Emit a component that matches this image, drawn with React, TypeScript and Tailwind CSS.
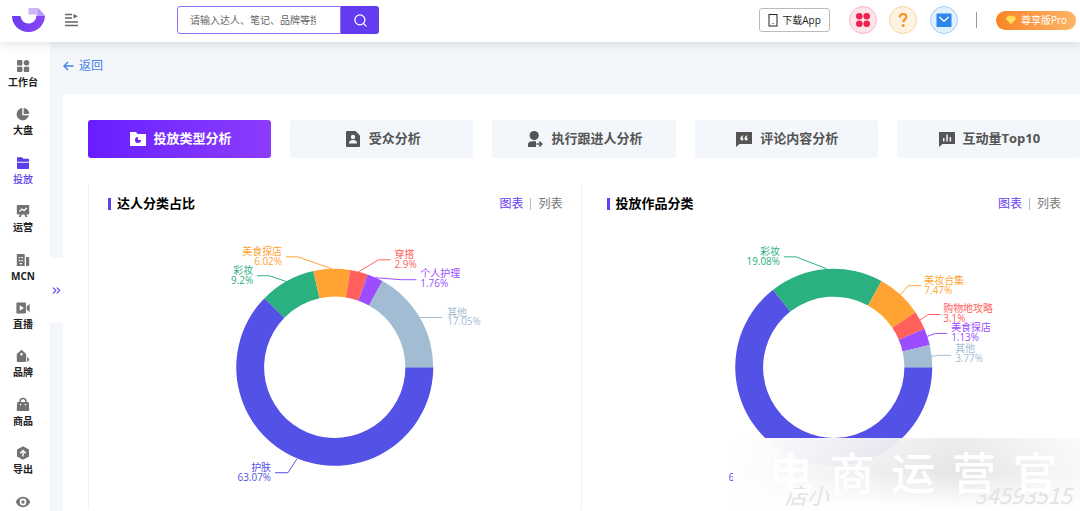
import type { ReactNode } from 'react';
import { ChevronsRight, Search } from 'lucide-react';

type Slice = {
  name: string;
  percent: string;
  color: string;
  // start and end angle in degrees, clockwise from three o'clock
  from: number;
  to: number;
  line: string;
  x: number;
  y: number;
  anchor: 'start' | 'end';
};

const CX = 247;
const CY = 144;
const OUTER = 99;
const INNER = 71;

const creatorSlices: Slice[] = [
  { name: '护肤', percent: '63.07%', color: '#5451e6', from: 0, to: 224.5, line: '187,250 200,250 209,236', x: 183, y: 248, anchor: 'end' },
  { name: '彩妆', percent: '9.2%', color: '#2bb080', from: 224.5, to: 257.5, line: '169,52 181,52 199,58', x: 165, y: 50, anchor: 'end' },
  { name: '美食探店', percent: '6.02%', color: '#ffa332', from: 257.5, to: 279, line: '198,33 210,33 244,45', x: 194, y: 31, anchor: 'end' },
  { name: '穿搭', percent: '2.9%', color: '#ff605c', from: 279, to: 289.5, line: '271,48 291,36 303,36', x: 307, y: 34, anchor: 'start' },
  { name: '个人护理', percent: '1.76%', color: '#9b4dff', from: 289.5, to: 299, line: '288,54 314,56 329,56', x: 333, y: 53, anchor: 'start' },
  { name: '其他', percent: '17.05%', color: '#a2bcd3', from: 299, to: 360, line: '332,94 343,94 355,94', x: 360, y: 92, anchor: 'start' },
];

const workSlices: Slice[] = [
  { name: '护肤', percent: '65.45%', color: '#5451e6', from: 0, to: 232, line: '178,250 191,250 202,232', x: 175, y: 248, anchor: 'end' },
  { name: '彩妆', percent: '19.08%', color: '#2bb080', from: 232, to: 299, line: '197,33 209,33 240,45', x: 193, y: 31, anchor: 'end' },
  { name: '美妆合集', percent: '7.47%', color: '#ffa332', from: 299, to: 326, line: '314,71 322,62 335,62', x: 338, y: 60, anchor: 'start' },
  { name: '购物地攻略', percent: '3.1%', color: '#ff605c', from: 326, to: 337, line: '333,97 342,91 354,91', x: 357, y: 88, anchor: 'start' },
  { name: '美食探店', percent: '1.13%', color: '#9b4dff', from: 337, to: 347, line: '341,113 349,110 361,110', x: 365, y: 108, anchor: 'start' },
  { name: '其他', percent: '3.77%', color: '#a2bcd3', from: 347, to: 360, line: '345,133 353,132 365,132', x: 369, y: 129, anchor: 'start' },
];

function point(radius: number, deg: number) {
  const rad = (deg * Math.PI) / 180;
  return `${(CX + radius * Math.cos(rad)).toFixed(2)} ${(CY + radius * Math.sin(rad)).toFixed(2)}`;
}

function ringPath({ from, to }: Slice) {
  const large = to - from > 180 ? 1 : 0;
  return `M${point(OUTER, from)} A${OUTER} ${OUTER} 0 ${large} 1 ${point(OUTER, to)} L${point(INNER, to)} A${INNER} ${INNER} 0 ${large} 0 ${point(INNER, from)} Z`;
}

function Donut({ slices, label }: { slices: Slice[]; label: string }) {
  return (
    <svg viewBox="0 0 494 287" className="block w-full" role="img" aria-label={label}>
      {slices.map((slice) => (
        <g key={slice.name} fill={slice.color}>
          <path d={ringPath(slice)} />
          <polyline points={slice.line} fill="none" stroke={slice.color} />
          <text x={slice.x} y={slice.y} textAnchor={slice.anchor} fontSize="10">
            {slice.name}
          </text>
          <text x={slice.x} y={slice.y + 10} textAnchor={slice.anchor} fontSize="10">
            {slice.percent}
          </text>
        </g>
      ))}
    </svg>
  );
}

function Glyph({ children, className = 'size-4' }: { children: ReactNode; className?: string }) {
  return (
    <svg viewBox="0 0 16 16" fill="currentColor" className={className} aria-hidden="true">
      {children}
    </svg>
  );
}

const navItems: { id: string; label?: string; icon: ReactNode; active?: boolean }[] = [
  {
    id: 'workbench',
    label: '工作台',
    icon: (
      <>
        <rect x="2" y="2" width="5.4" height="5.4" rx="1" />
        <circle cx="11.5" cy="4.7" r="2.8" />
        <rect x="2" y="8.7" width="5.4" height="5.4" rx="1" />
        <rect x="8.8" y="8.7" width="5.4" height="5.4" rx="1" />
      </>
    ),
  },
  {
    id: 'market',
    label: '大盘',
    icon: (
      <>
        <path d="M7.3 2a6.2 6.2 0 1 0 6.600 7.300H7.300z" />
        <path d="M8.700 1.900v6h5.500a6 6 0 0 0-5.500-6z" />
      </>
    ),
  },
  {
    id: 'placement',
    label: '投放',
    active: true,
    icon: (
      <>
        <path d="M2 2.200h5l1.400 1.600H14v3H2z" />
        <path d="M2 7.800h12V13a1 1 0 0 1-1 1H3a1 1 0 0 1-1-1z" />
      </>
    ),
  },
  {
    id: 'operation',
    label: '运营',
    icon: (
      <>
        <path d="M2.500 2h11a.7.7 0 0 1 .7.7v8.100a.7.7 0 0 1-.7.7h-2.200l1.200 2.500h-2l-1.200-2.500H6.900L5.700 14h-2l1.200-2.500H2.500a.7.7 0 0 1-.7-.7V2.700a.7.7 0 0 1 .7-.7z" />
        <path d="m4.500 8.500 2.500-2.500 2 1.600L11.800 5" fill="none" stroke="#fff" strokeWidth="1.300" />
      </>
    ),
  },
  {
    id: 'mcn',
    label: 'MCN',
    icon: (
      <>
        <path
          fillRule="evenodd"
          d="M2.500 2H9a.7.7 0 0 1 .7.7V14H1.800V2.700a.7.7 0 0 1 .7-.7zM3.800 5v1.300h1.500V5zm2.600 0v1.300h1.500V5zM3.800 8v1.300h1.500V8zm2.600 0v1.300h1.500V8zM4.700 11v1.200h2.200V11z"
        />
        <path d="M11 5h2.300a.9.9 0 0 1 .9.9v7.200a.9.9 0 0 1-.9.9H11z" />
      </>
    ),
  },
  {
    id: 'live',
    label: '直播',
    icon: (
      <>
        <path
          fillRule="evenodd"
          d="M2 2.600h8.300a.6.6 0 0 1 .6.6v9.600a.6.6 0 0 1-.6.6H2a.6.6 0 0 1-.6-.6V3.200a.6.6 0 0 1 .6-.6zM4.700 5.300v5.400L9 8z"
        />
        <path d="M11.700 6.300 14.600 4v8l-2.900-2.300z" />
      </>
    ),
  },
  {
    id: 'brand',
    label: '品牌',
    icon: (
      <>
        <path
          fillRule="evenodd"
          d="M6.500 1.800 11.200 6v7.200a.8.8 0 0 1-.8.8H2.600a.8.8 0 0 1-.8-.8V6zm0 3.200a1.300 1.300 0 1 0 0 2.600 1.300 1.300 0 0 0 0-2.600z"
        />
        <path d="m12.200 8.500 2.400 3.500-2.400 2z" />
      </>
    ),
  },
  {
    id: 'goods',
    label: '商品',
    icon: (
      <>
        <path d="M2.300 5h11.400l.6 8a1 1 0 0 1-1 1H2.700a1 1 0 0 1-1-1z" />
        <path d="M5 6V4.500a3 3 0 0 1 6 0V6" fill="none" stroke="currentColor" strokeWidth="1.500" />
        <circle cx="5.600" cy="7.600" r="0.800" fill="#fff" />
        <circle cx="10.400" cy="7.600" r="0.800" fill="#fff" />
      </>
    ),
  },
  {
    id: 'export',
    label: '导出',
    icon: (
      <>
        <path d="m8 1.200 6 3.400v6.800l-6 3.400-6-3.400V4.600z" />
        <path d="M8 11.500V6M5.300 8.300 8 5.600l2.700 2.700" fill="none" stroke="#fff" strokeWidth="1.400" />
      </>
    ),
  },
  {
    id: 'watch',
    icon: (
      <path
        fillRule="evenodd"
        d="M8 2.800c3.400 0 6 2.200 7.200 5.200-1.200 3-3.800 5.200-7.200 5.200S2 11 .8 8C2 5 4.600 2.800 8 2.800zm0 1.800a3.400 3.400 0 1 0 0 6.800 3.400 3.400 0 0 0 0-6.800zm0 1.700a1.700 1.700 0 1 1 0 3.400 1.700 1.700 0 0 1 0-3.400z"
      />
    ),
  },
];

const tabs: { label: string; icon: ReactNode; active?: boolean }[] = [
  {
    label: '投放类型分析',
    active: true,
    icon: (
      <>
        <path d="M0 1h6l1.500 2H16v12H0z" />
        <path d="M8 6a3 3 0 1 0 3 3H8z" fill="#6f22ff" />
      </>
    ),
  },
  {
    label: '受众分析',
    icon: (
      <>
        <path d="M2 0h8.500L15 4.500V15a1 1 0 0 1-1 1H2a1 1 0 0 1-1-1V1a1 1 0 0 1 1-1z" />
        <circle cx="8" cy="6" r="2.200" fill="#f3f6fa" />
        <path d="M4 12.500c0-2.500 1.500-3.500 4-3.500s4 1 4 3.500z" fill="#f3f6fa" />
      </>
    ),
  },
  {
    label: '执行跟进人分析',
    icon: (
      <>
        <circle cx="7.200" cy="4.600" r="4.600" />
        <path d="M1 16v-2.500C1 11 3.500 10.300 7 10.300h2V16z" />
        <path d="M9.500 13h5M12.300 10.500l2.500 2.500-2.500 2.500" fill="none" stroke="currentColor" strokeWidth="1.600" />
      </>
    ),
  },
  {
    label: '评论内容分析',
    icon: (
      <>
        <path d="M0 1h16v12H3.500L0 16z" />
        <path d="M7.300 4.500C5.300 4.700 4.300 6 4.300 7.600c0 1.100.7 1.800 1.600 1.800s1.500-.6 1.500-1.500-.6-1.400-1.500-1.400c.1-.5.6-1 1.400-1.200zm4.200 0c-2 .2-3 1.500-3 3.100 0 1.100.7 1.800 1.600 1.800s1.500-.6 1.500-1.500-.6-1.400-1.500-1.400c.1-.5.6-1 1.400-1.200z" fill="#f3f6fa" />
      </>
    ),
  },
  {
    label: '互动量Top10',
    icon: (
      <>
        <path d="M0 1h16v12H3.500L0 16z" />
        <path d="M4 7h1.500v3.500H4zM7.300 3.500h1.500v7H7.300zM10.600 6h1.500v4.500h-1.500z" fill="#f3f6fa" />
      </>
    ),
  },
];

function Header() {
  return (
    <header className="relative z-20 flex h-[42px] shrink-0 items-center bg-white pb-[2px] shadow-[0_2px_10px_rgba(60,80,90,0.16)]">
      <a href="#home" aria-label="首页" className="ml-[11px]">
        <svg viewBox="0 0 34 26" className="h-[26px] w-[34px]" aria-hidden="true">
          <defs>
            <linearGradient id="logo" x1="0" x2="1">
              <stop offset="0" stopColor="#6b3df0" />
              <stop offset="1" stopColor="#8a45f5" />
            </linearGradient>
          </defs>
          <path d="M1 9h8.500c.6 4.500 3.800 7.500 8 7.500 3.800 0 6.700-2.200 7.700-6V8.500H34c0 9-7.500 16.500-16.500 16.500S1 18 1 9z" fill="url(#logo)" />
          <path d="M17.500 1H27l7 7.500h-8.800v-1h-7.700z" fill="#cfb8f8" />
          <path d="M27 1v7.500h7z" fill="#b595f5" />
        </svg>
      </a>
      <button type="button" aria-label="收起菜单" className="ml-5 text-[#666]">
        <svg viewBox="0 0 14 14" className="size-[14px]" fill="none" stroke="currentColor" strokeWidth="1.300" aria-hidden="true">
          <path d="M0 1.500h7M0 5h7M0 9h13M0 12.500h13" />
          <path d="M8.500 1v4.500L13 3.200z" fill="currentColor" stroke="none" />
        </svg>
      </button>
      <form className="ml-[98px] flex h-7 w-[202px]" onSubmit={(e) => e.preventDefault()}>
        <input
          type="text"
          aria-label="搜索"
          placeholder="请输入达人、笔记、品牌等搜索"
          className="min-w-0 flex-1 rounded-l-[3px] border border-[#8f70f2] pr-6 pl-3 text-[10px] outline-none placeholder:text-[#666]"
        />
        <button type="submit" aria-label="搜索" className="flex w-[38px] items-center justify-center rounded-r-[3px] bg-[#643cf0] text-white">
          <Search size={15} />
        </button>
      </form>
      <div className="ml-auto flex items-center pr-1">
        <button type="button" className="flex h-6 w-[71px] items-center justify-center gap-1 rounded-[3px] border border-[#bbb] text-[10px] text-[#222]">
          <svg viewBox="0 0 10 13" className="h-[13px] w-[10px]" fill="none" stroke="currentColor" aria-hidden="true">
            <rect x="1" y="0.500" width="8" height="11.500" />
            <path d="M4.500 9.500h1" />
          </svg>
          下载App
        </button>
        <button type="button" aria-label="应用" className="ml-[19px] flex size-7 items-center justify-center rounded-full border border-[#fbb6c4] bg-[#fde4ea] text-[#f0214f]">
          <Glyph>
            <circle cx="4.300" cy="4.300" r="3.300" />
            <circle cx="11.700" cy="4.300" r="3.300" />
            <circle cx="4.300" cy="11.700" r="3.300" />
            <circle cx="11.700" cy="11.700" r="3.300" />
          </Glyph>
        </button>
        <button type="button" aria-label="帮助" className="ml-3 flex size-7 items-center justify-center rounded-full border border-[#fbd3a6] bg-[#fef2e2] text-[#f98f1d]">
          <Glyph>
            <path d="M4.800 5.500C4.800 3.200 6 2 8 2s3.300 1.200 3.300 3c0 2.300-3 2.500-3 5.200" fill="none" stroke="currentColor" strokeWidth="2.200" />
            <circle cx="8.200" cy="13.500" r="1.500" />
          </Glyph>
        </button>
        <button type="button" aria-label="消息" className="ml-[13px] flex size-7 items-center justify-center rounded-full border border-[#a9cdf8] bg-[#e0f1fe] text-[#2d86ee]">
          <Glyph>
            <rect x="0.500" y="1.500" width="15" height="13.500" rx="0.600" />
            <path d="m3.300 5 4.700 4.300L12.700 5" fill="none" stroke="#fff" strokeWidth="1.300" />
          </Glyph>
        </button>
        <span className="ml-[18px] h-4 w-px bg-[#999]" />
        <a
          href="#pro"
          className="ml-[19px] flex h-[19px] w-[80px] items-center justify-center gap-1 rounded-full bg-linear-to-r from-[#fa8322] to-[#fcb568] text-[10px] text-white"
        >
          <svg viewBox="0 0 12 10" className="h-[10px] w-3" aria-hidden="true">
            <path d="M3 .8h6l2.500 3L6 9.500.5 3.800z" fill="#ffd94a" />
            <path d="M3.500 3.500 6 5.800l2.500-2.300" fill="none" stroke="#fff3b0" />
          </svg>
          尊享版Pro
        </a>
      </div>
    </header>
  );
}

function Sidebar() {
  return (
    <nav className="w-[50px] shrink-0 bg-white pt-4 pr-1">
      <div className="grid h-[484px] grid-rows-10">
        {navItems.map((item) => (
          <a
            key={item.id}
            href={`#${item.id}`}
            className={`flex flex-col items-center text-[10px] leading-4 ${
              item.active ? 'font-medium text-[#5b3ee8]' : 'font-bold text-[#222]'
            }`}
          >
            <Glyph className={item.active ? 'size-4 text-[#5b3ee8]' : 'size-4 text-[#737373]'}>{item.icon}</Glyph>
            {item.label}
          </a>
        ))}
      </div>
    </nav>
  );
}

function ChartPanel({ title, slices, className }: { title: string; slices: Slice[]; className: string }) {
  return (
    <section className={`border-x ${className}`}>
      <div className="flex h-10 items-center justify-between pr-[18px] pl-[19px]">
        <h2 className="flex items-center gap-[6px] text-[13px] font-bold text-black">
          <span className="h-3 w-[3px] bg-[#6340ee]" />
          {title}
        </h2>
        <div className="flex items-center gap-[7px] text-[12px]">
          <button type="button" className="text-[#6340ee]">图表</button>
          <span className="h-3 w-px bg-[#bbb]" />
          <button type="button" className="text-[#777]">列表</button>
        </div>
      </div>
      <Donut slices={slices} label={title} />
    </section>
  );
}

function Watermark() {
  return (
    <div className="absolute right-0 bottom-[3px] h-[70px] w-[347px] bg-linear-to-r from-white via-[#e2e2e4]/90 via-65% to-[#f8f8f8]/95 font-['Noto_Sans_CJK_SC',sans-serif]">
      <div className="flex h-full items-end justify-between bg-linear-to-b from-white/30 via-transparent to-white pr-2 pl-[52px] text-[22px] leading-7 text-[#e3e3e5] italic">
        <span>店小</span>
        <span>34593515</span>
      </div>
      <div className="absolute inset-0 flex items-center justify-end gap-[17px] pr-[23px] pb-1 text-[44px] font-medium text-white">
        {['电', '商', '运', '营', '官'].map((char) => (
          <span key={char}>{char}</span>
        ))}
      </div>
    </div>
  );
}

export default function App() {
  return (
    <div className="flex h-screen flex-col overflow-hidden bg-[#f3f6fa] font-['Open_Sans','Noto_Sans_CJK_SC',sans-serif]">
      <Header />
      <div className="relative flex min-h-0 flex-1">
        <Sidebar />
        <button type="button" aria-label="展开" className="absolute top-[216px] left-[50px] flex h-[65px] w-[13px] items-center justify-center bg-white text-[#6340ee]">
          <ChevronsRight size={13} strokeWidth={2} />
        </button>

        <main className="flex min-w-0 flex-1 flex-col pl-[13px]">
          <a href="#back" className="flex h-[52px] items-center gap-[5px] pb-1 text-[12px] text-[#4285e8]">
            <svg viewBox="0 0 11 10" className="h-[10px] w-[11px]" fill="none" stroke="currentColor" strokeWidth="1.400" aria-hidden="true">
              <path d="M10.500 5H1.500M5 1 1 5l4 4" />
            </svg>
            返回
          </a>
          <div className="flex-1 rounded-tl bg-white pt-[26px] pl-[25px]">
            <div className="grid grid-cols-5 gap-[19px]">
              {tabs.map((tab) => (
                <button
                  key={tab.label}
                  type="button"
                  className={`flex h-[38px] items-center justify-center gap-2 rounded-[3px] pl-[2px] text-[13px] font-bold whitespace-nowrap ${
                    tab.active ? 'bg-linear-to-r from-[#681cff] to-[#8d3bfb] text-white' : 'bg-[#f3f6fa] text-[#555]'
                  }`}
                >
                  <Glyph>{tab.icon}</Glyph>
                  {tab.label}
                </button>
              ))}
            </div>
            <div className="mt-[26px] grid grid-cols-2 gap-[5px]">
              <ChartPanel title="达人分类占比" slices={creatorSlices} className="border-[#eef0f3]" />
              <ChartPanel title="投放作品分类" slices={workSlices} className="border-transparent" />
            </div>
          </div>
        </main>

        <Watermark />
      </div>
    </div>
  );
}
